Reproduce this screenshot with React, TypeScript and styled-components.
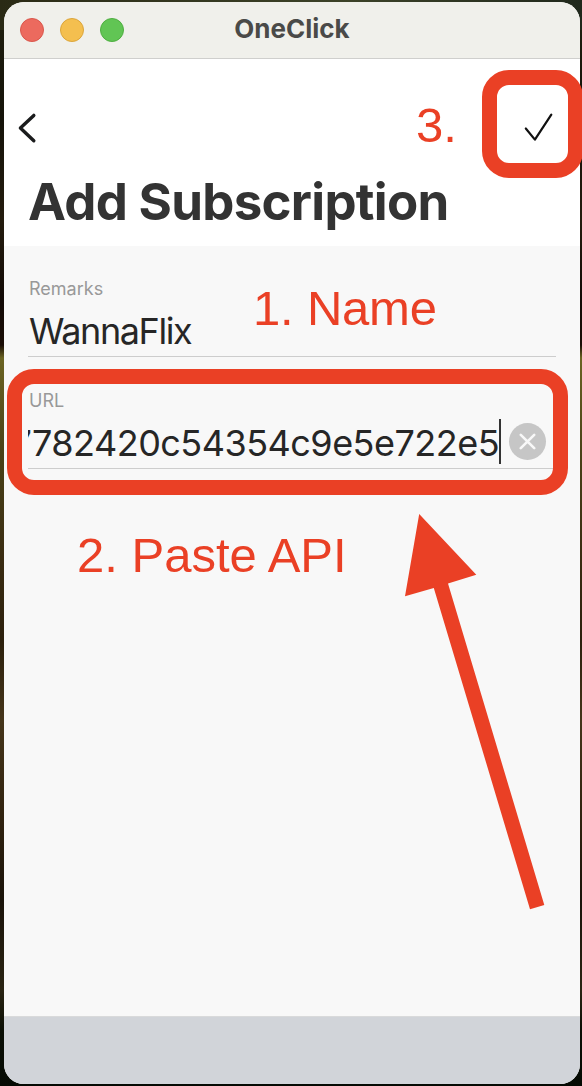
import React from "react";
import styled, { createGlobalStyle } from "styled-components";

const RED = "#ea4025";

const GlobalStyle = createGlobalStyle`
  *, *::before, *::after { box-sizing: border-box; }
  html, body { margin: 0; padding: 0; }
  body { overflow: hidden; font-family: Inter, "Liberation Sans", sans-serif; }
`;

const Desktop = styled.main`
  position: relative;
  width: 582px;
  height: 1086px;
  padding: 2px 2px 2px 4px;
  overflow: hidden;
  background:
    linear-gradient(90deg, #2a2a15, #3c4228 60%, #20281c) top / 100% 30px no-repeat,
    linear-gradient(180deg, #20200f 0, #15130a 120px, #241c0e 220px, #120a06 300px, #1a0d06 345px,
      #6b6423 358px, #4a4218 450px, #3a2c12 560px, #2c200d 640px, #45351a 720px, #30220f 820px,
      #1a130a 900px, #2a2413 990px, #0b0f05 1030px, #050a03 1086px);
`;

const Window = styled.section`
  display: flex;
  flex-direction: column;
  height: 100%;
  border-radius: 20px;
  overflow: hidden;
  background: #f8f8f8;
`;

const TitleBar = styled.header`
  display: grid;
  grid-template-columns: 1fr auto 1fr;
  align-items: center;
  height: 57px;
  padding: 0 16px 1px;
  background: #f0f0eb;
  border-bottom: 1px solid #cfcfcd;
`;

const Lights = styled.div`
  display: flex;
  gap: 16px;
`;

const Light = styled.span<{ $fill: string; $edge: string }>`
  width: 24px;
  height: 24px;
  border-radius: 50%;
  background: ${(p) => p.$fill};
  border: 1px solid ${(p) => p.$edge};
`;

const WindowTitle = styled.div`
  color: #4a4a48;
  font-size: 26px;
  font-weight: 700;
  line-height: 30px;
  padding-bottom: 2px;
`;

const NavBar = styled.div`
  height: 187px;
  padding: 45px 12px 0 10px;
  background: #fff;
`;

const Actions = styled.div`
  display: flex;
  justify-content: space-between;
  height: 48px;
`;

const IconButton = styled.button`
  display: flex;
  padding: 0;
  border: 0;
  background: none;
  height: 48px;
`;

const PageTitle = styled.h1`
  margin: 20px 0 0 14px;
  color: #333;
  font-size: 51px;
  font-weight: 700;
  line-height: 60px;
  letter-spacing: -0.7px;
  white-space: nowrap;
`;

const Form = styled.form`
  flex: 1;
  padding: 29px 24px 0 24px;
`;

const Field = styled.div`
  height: 82px;
  margin-bottom: 30px;
  border-bottom: 1px solid #cdcdcd;
`;

const Label = styled.div`
  color: #999;
  font-size: 18px;
  line-height: 27px;
  padding-left: 1px;
`;

const InputRow = styled.div`
  display: flex;
  align-items: center;
  height: 58px;
`;

const Value = styled.div<{ $scrolled?: boolean; $tracking: number }>`
  display: flex;
  justify-content: ${(p) => (p.$scrolled ? "flex-end" : "flex-start")};
  width: 471px;
  padding-left: ${(p) => (p.$scrolled ? 0 : 1)}px;
  overflow: hidden;
  color: #262626;
  font-size: 36px;
  line-height: 46px;
  letter-spacing: ${(p) => p.$tracking}px;
  white-space: nowrap;
`;

const Caret = styled.span`
  width: 2px;
  height: 45px;
  margin-bottom: 4px;
  background: #333;
`;

const ClearButton = styled.button`
  display: grid;
  place-items: center;
  width: 37px;
  height: 37px;
  margin: 0 0 4px 8px;
  padding: 0;
  border: 0;
  border-radius: 50%;
  background: #c6c6c6;
`;

const KeyboardBar = styled.footer`
  height: 68px;
  background: #d1d4d9;
  border-top: 1px solid #d9dadb;
`;

const Highlight = styled.div<{ $x: number; $y: number; $w: number; $h: number }>`
  position: absolute;
  left: ${(p) => p.$x}px;
  top: ${(p) => p.$y}px;
  width: ${(p) => p.$w}px;
  height: ${(p) => p.$h}px;
  border: 15px solid ${RED};
  border-radius: 27px;
`;

const Note = styled.div<{ $x: number; $y: number; $tracking?: number }>`
  position: absolute;
  left: ${(p) => p.$x}px;
  top: ${(p) => p.$y}px;
  color: ${RED};
  font-family: "Liberation Sans", Arial, sans-serif;
  font-size: 49px;
  line-height: 56px;
  letter-spacing: ${(p) => p.$tracking ?? 0}px;
  white-space: nowrap;
`;

const Arrow = styled.svg`
  position: absolute;
  left: 400px;
  top: 510px;
`;

export default function App() {
  return (
    <Desktop>
      <GlobalStyle />
      <Window>
        <TitleBar>
          <Lights>
            <Light $fill="#ec6a5e" $edge="#d9574c" />
            <Light $fill="#f4bf4f" $edge="#dba53b" />
            <Light $fill="#61c554" $edge="#4fae41" />
          </Lights>
          <WindowTitle>OneClick</WindowTitle>
        </TitleBar>
        <NavBar>
          <Actions>
            <IconButton aria-label="Back">
              <svg width="32" height="48" viewBox="0 0 32 48" fill="none" stroke="#1b1c1d" strokeWidth="3.4" strokeLinecap="round" strokeLinejoin="round">
                <path d="M19.8 11.4 6.4 24 19.8 36.8" />
              </svg>
            </IconButton>
            <IconButton aria-label="Done">
              <svg width="48" height="48" viewBox="0 0 48 48" fill="none" stroke="#111" strokeWidth="2.2" strokeLinecap="round" strokeLinejoin="round">
                <path d="M5.8 24.5 14.9 35.6 31.3 10.6" />
              </svg>
            </IconButton>
          </Actions>
          <PageTitle>Add Subscription</PageTitle>
        </NavBar>
        <Form>
          <Field>
            <Label>Remarks</Label>
            <InputRow>
              <Value $tracking={-1.4}>WannaFlix</Value>
            </InputRow>
          </Field>
          <Field>
            <Label>URL</Label>
            <InputRow>
              <Value $scrolled $tracking={-0.52}>7782420c54354c9e5e722e5</Value>
              <Caret />
              <ClearButton type="button" aria-label="Clear">
                <svg width="17" height="17" viewBox="0 0 17 17" stroke="#f8f8f8" strokeWidth="2.6" strokeLinecap="round">
                  <path d="M1.8 1.8 15.2 15.2M15.2 1.8 1.8 15.2" />
                </svg>
              </ClearButton>
            </InputRow>
          </Field>
        </Form>
        <KeyboardBar />
      </Window>
      <Highlight $x={482} $y={70} $w={101} $h={108} />
      <Highlight $x={7} $y={369} $w={561} $h={126} />
      <Note $x={416} $y={97}>3.</Note>
      <Note $x={253} $y={280} $tracking={-0.2}>1. Name</Note>
      <Note $x={77} $y={527}>2. Paste API</Note>
      <Arrow width="150" height="402" viewBox="400 510 150 402" fill={RED}>
        <path d="M419.2 514 476.3 574.8 448 583.4 544.3 905 530 909.2 433.8 588 405 596.3Z" />
      </Arrow>
    </Desktop>
  );
}
